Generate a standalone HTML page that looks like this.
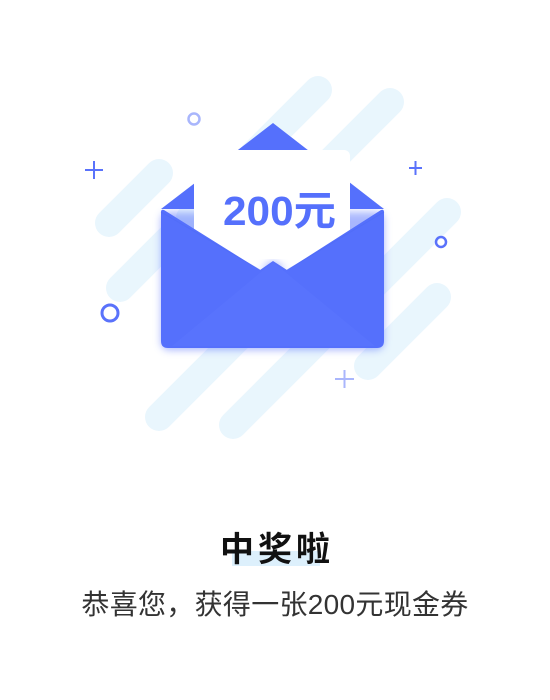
<!DOCTYPE html>
<html><head><meta charset="utf-8"><style>
html,body{margin:0;padding:0;background:#fff;}
body{width:550px;height:700px;position:relative;overflow:hidden;font-family:"Liberation Sans","Noto Sans CJK SC",sans-serif;}
.t{position:absolute;left:0;width:550px;text-align:center;white-space:nowrap;}
</style></head><body>
<svg width="550" height="470" style="position:absolute;left:0;top:0">
<defs>
<filter id="sh" x="-20%" y="-20%" width="140%" height="140%"><feGaussianBlur stdDeviation="4"/></filter>
</defs>
<g stroke="#e9f6fd" stroke-width="28" stroke-linecap="round" fill="none">
<line x1="318" y1="90" x2="190" y2="218"/>
<line x1="390" y1="102" x2="260" y2="232"/>
<line x1="159" y1="173" x2="109" y2="223"/>
<line x1="120" y1="288" x2="175" y2="233"/>
<line x1="447" y1="212" x2="365" y2="294"/>
<line x1="437" y1="297" x2="368" y2="366"/>
<line x1="159" y1="417" x2="265" y2="311"/>
<line x1="233" y1="425" x2="340" y2="318"/>
</g>
<circle cx="194" cy="119" r="5.5" fill="none" stroke="#a9b6fc" stroke-width="2.5"/>
<circle cx="441" cy="242" r="5" fill="none" stroke="#5a72fb" stroke-width="2.5"/>
<circle cx="110" cy="313" r="8" fill="none" stroke="#5a72fb" stroke-width="3"/>
<g stroke="#5a72fb" stroke-width="2">
<line x1="85" y1="170" x2="103" y2="170"/><line x1="94" y1="161" x2="94" y2="179"/>
<line x1="409" y1="168" x2="422" y2="168"/><line x1="415.5" y1="161" x2="415.5" y2="175"/>
</g>
<g stroke="#aab6fc" stroke-width="2">
<line x1="335" y1="379" x2="354" y2="379"/><line x1="344.5" y1="370" x2="344.5" y2="388"/>
</g>
<rect x="161" y="212" width="223" height="138" rx="8" fill="#5570fc" filter="url(#sh)" opacity="0.5"/>
<path d="M161 209 L273 123 L384 209 Z" fill="#5570fc"/>
<rect x="194" y="150" width="156" height="140" rx="6" fill="#fff"/>
<text x="223" y="225" font-family="Liberation Sans,Noto Sans CJK SC,sans-serif" font-size="41" fill="#5570fc" font-weight="bold" textLength="113" lengthAdjust="spacingAndGlyphs">200元</text>
<path d="M260 270 L273 261 L287 270 Z" fill="#5570fc" filter="url(#sh)" opacity="0.6"/>
<path d="M161 212 Q161 209 164 210 L260 270 L273 261 L287 270 L381 210 Q384 209 384 212 L384 341 Q384 348 377 348 L168 348 Q161 348 161 341 Z" fill="#5570fc"/>
<path d="M172 346 L273 262 L375 346 Z" fill="#5873fd"/>
<path d="M161 212 L260 270 M287 270 L384 212" stroke="#4f6af5" stroke-width="1" fill="none" opacity="0.6"/>
</svg>
<div style="position:absolute;left:232px;top:551px;width:88px;height:15px;background:#ddf0fc"></div>
<div class="t" style="top:522px;font-size:34px;font-weight:bold;color:#111;letter-spacing:4px;text-indent:4px;">中奖啦</div>
<div class="t" style="top:583px;font-size:28px;color:#333;letter-spacing:0.3px;">恭喜您，获得一张200元现金券</div>
</body></html>
